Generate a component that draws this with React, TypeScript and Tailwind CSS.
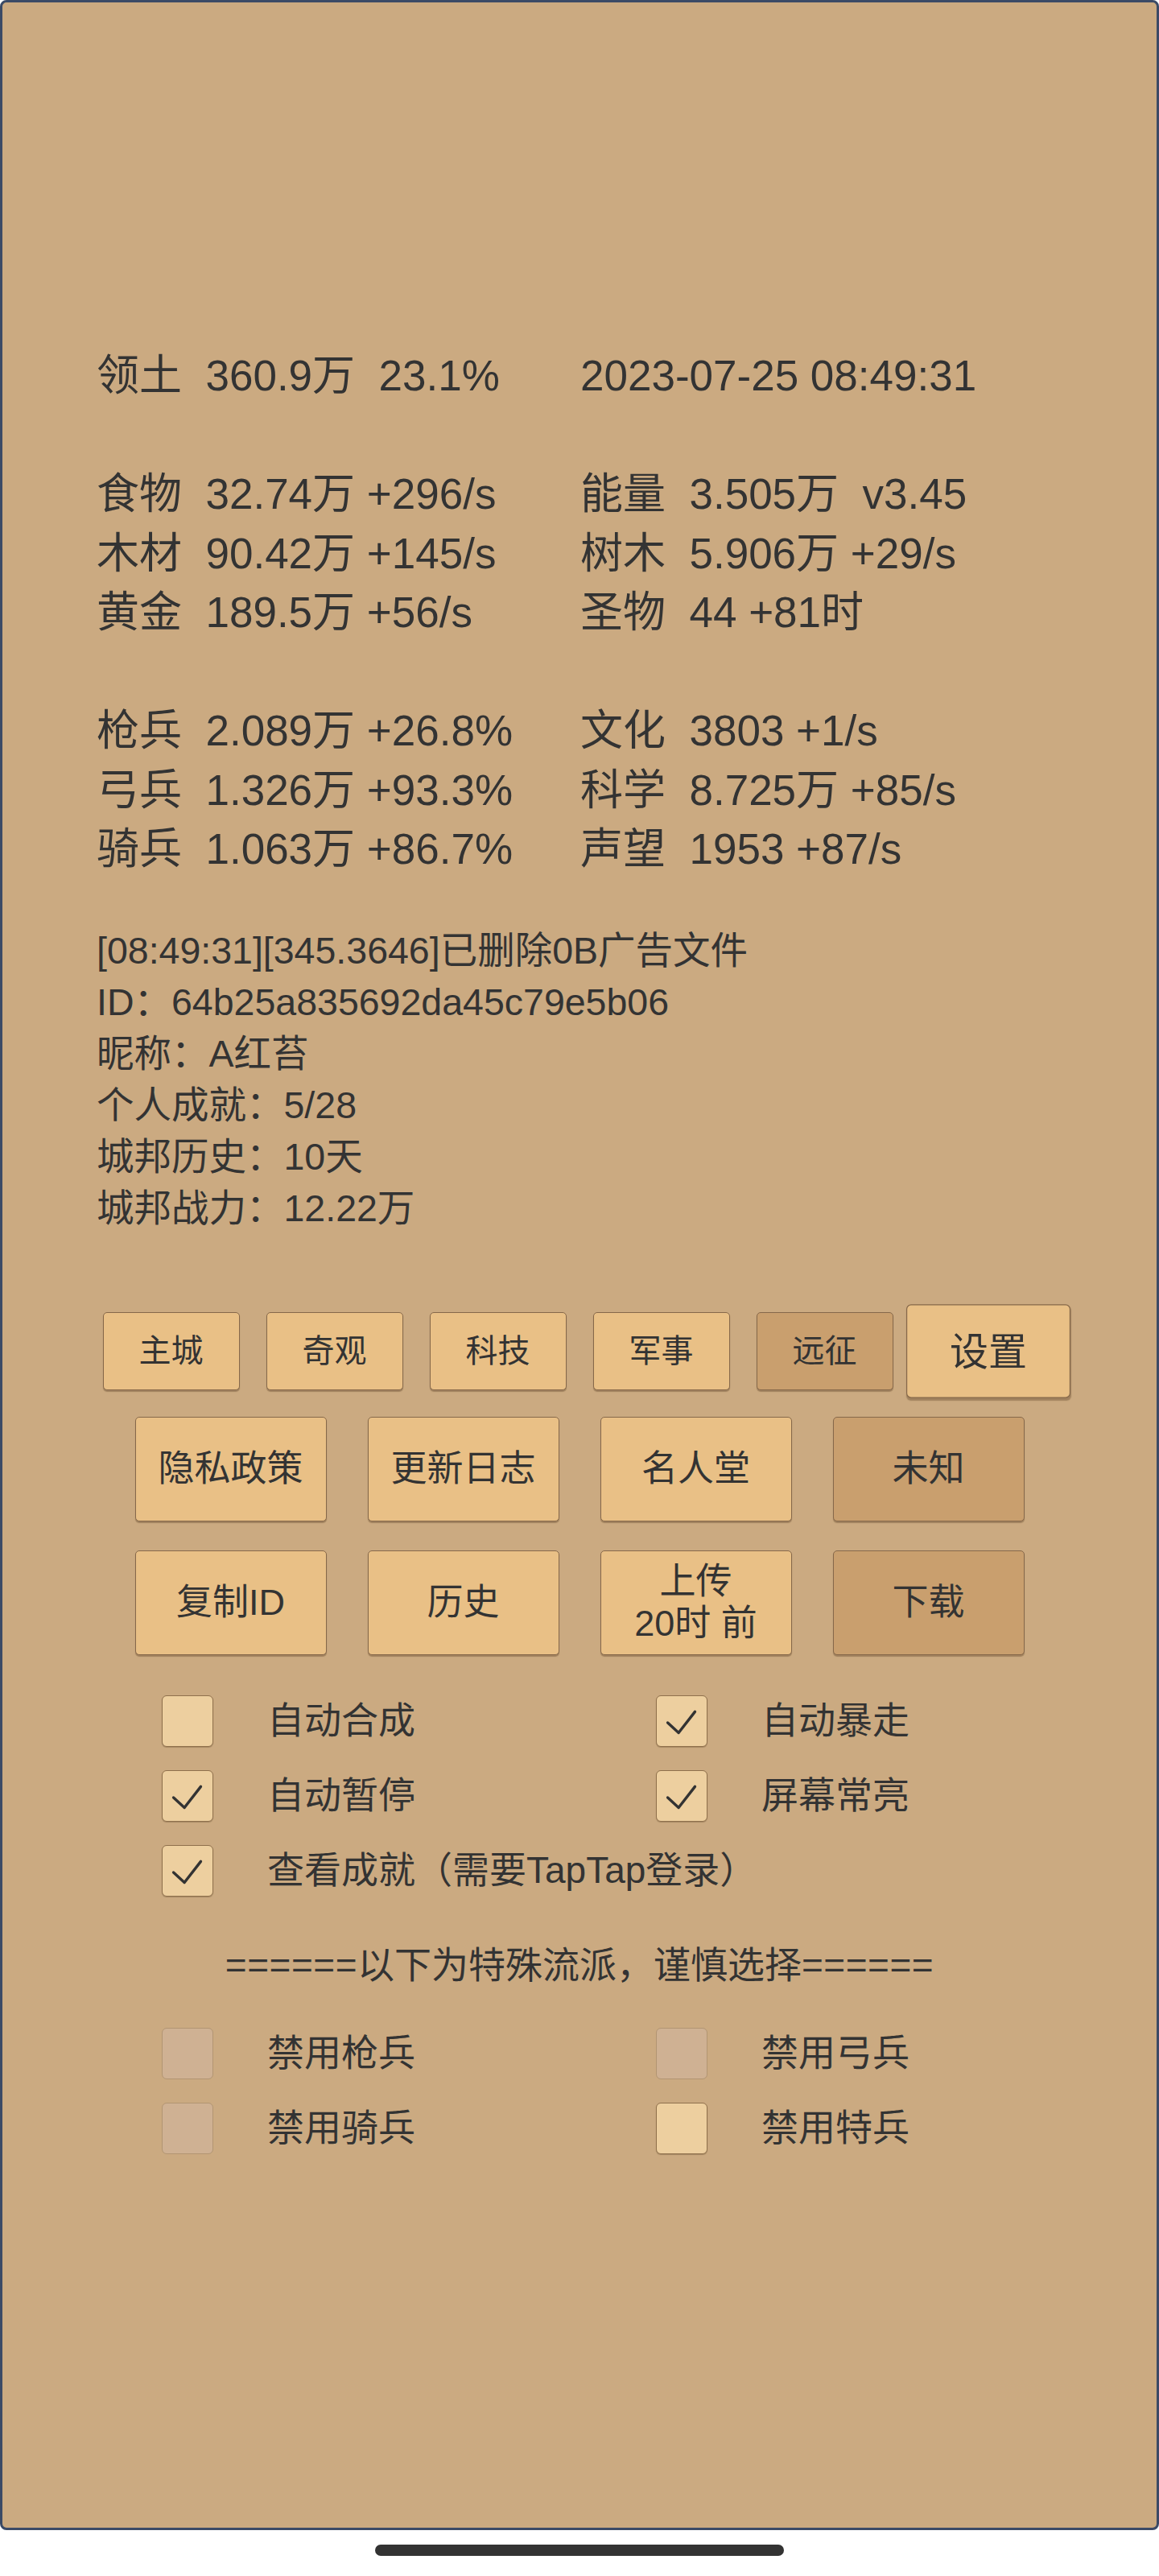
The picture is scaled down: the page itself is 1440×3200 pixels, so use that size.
import React from "react";

const leftStats = [
  "领土  360.9万  23.1%",
  "",
  "食物  32.74万 +296/s",
  "木材  90.42万 +145/s",
  "黄金  189.5万 +56/s",
  "",
  "枪兵  2.089万 +26.8%",
  "弓兵  1.326万 +93.3%",
  "骑兵  1.063万 +86.7%",
];

const rightStats = [
  "2023-07-25 08:49:31",
  "",
  "能量  3.505万  v3.45",
  "树木  5.906万 +29/s",
  "圣物  44 +81时",
  "",
  "文化  3803 +1/s",
  "科学  8.725万 +85/s",
  "声望  1953 +87/s",
];

const logLines = [
  "[08:49:31][345.3646]已删除0B广告文件",
  "ID：64b25a835692da45c79e5b06",
  "昵称：A红苔",
  "个人成就：5/28",
  "城邦历史：10天",
  "城邦战力：12.22万",
];

const tabs = [
  { label: "主城", dark: false },
  { label: "奇观", dark: false },
  { label: "科技", dark: false },
  { label: "军事", dark: false },
  { label: "远征", dark: true },
];

function StatColumn({ lines, width }: { lines: string[]; width: string }) {
  return (
    <div className={width}>
      {lines.map((line, i) => (
        <div key={i} className="h-[73.5px] leading-[73.5px] whitespace-pre">
          {line || "\u00a0"}
        </div>
      ))}
    </div>
  );
}

function BigButton({ children, dark }: { children: React.ReactNode; dark?: boolean }) {
  return (
    <div
      className={
        "w-[238px] h-[130px] flex flex-col items-center justify-center rounded-[5px] border border-[#86684a] shadow-[0_2px_1px_rgba(80,55,30,0.35)] text-[45px] leading-[52px] text-[#333] " +
        (dark ? "bg-[#C99F6E]" : "bg-[#E9C086]")
      }
    >
      {children}
    </div>
  );
}

function CheckBox({ checked, disabled }: { checked?: boolean; disabled?: boolean }) {
  return (
    <div
      className={
        "w-[64px] h-[64px] shrink-0 rounded-[6px] border " +
        (disabled
          ? "bg-[#CFB193] border-[#b29572]"
          : "bg-[#EDCF9F] border-[#8f704c] shadow-[0_1px_1px_rgba(80,55,30,0.3)]")
      }
    >
      {checked && (
        <svg viewBox="0 0 64 64" className="w-full h-full">
          <polyline
            points="14,34 28,47 49,20"
            fill="none"
            stroke="#333"
            strokeWidth="3.5"
            strokeLinecap="round"
            strokeLinejoin="round"
          />
        </svg>
      )}
    </div>
  );
}

function Option({ label, checked, disabled }: { label: string; checked?: boolean; disabled?: boolean }) {
  return (
    <div className="flex items-center h-[64px]">
      <CheckBox checked={checked} disabled={disabled} />
      <span className="ml-[67px] text-[46px] text-[#333] whitespace-nowrap">{label}</span>
    </div>
  );
}

export default function App() {
  return (
    <div className="w-[1440px] h-[3200px] bg-white font-['Liberation_Sans','Noto_Sans_CJK_SC',sans-serif]">
      <div className="h-[3143px] bg-[#CBAA81] border-[3px] border-[#3b4a66] rounded-[8px] flex flex-col">
        {/* 资源统计 */}
        <div className="mt-[427px] pl-[117px] flex text-[53px] text-[#333]">
          <StatColumn lines={leftStats} width="w-[601px]" />
          <StatColumn lines={rightStats} width="flex-1" />
        </div>

        {/* 日志 */}
        <div className="mt-[57px] pl-[117px] text-[46.5px] text-[#333]">
          {logLines.map((line, i) => (
            <div key={i} className="h-[64px] leading-[64px] whitespace-pre">
              {line}
            </div>
          ))}
        </div>

        {/* 标签页 */}
        <div className="mt-[97px] flex justify-center gap-[33px]">
          {tabs.map((t) => (
            <div
              key={t.label}
              className={
                "w-[170px] h-[97px] flex items-center justify-center rounded-[5px] border border-[#86684a] shadow-[0_2px_1px_rgba(80,55,30,0.35)] text-[40px] text-[#333] " +
                (t.dark ? "bg-[#C99F6E]" : "bg-[#E9C086]")
              }
            >
              {t.label}
            </div>
          ))}
          <div className="w-[170px] h-[97px] flex items-center justify-center rounded-[5px] border border-[#86684a] shadow-[0_2px_1px_rgba(80,55,30,0.35)] text-[40px] text-[#333] bg-[#E9C086] scale-[1.2]">
            设置
          </div>
        </div>

        <div className="mt-[33px] flex justify-center gap-[51px]">
          <BigButton>隐私政策</BigButton>
          <BigButton>更新日志</BigButton>
          <BigButton>名人堂</BigButton>
          <BigButton dark>未知</BigButton>
        </div>

        <div className="mt-[36px] flex justify-center gap-[51px]">
          <BigButton>复制ID</BigButton>
          <BigButton>历史</BigButton>
          <BigButton>
            <span>上传</span>
            <span className="whitespace-pre">20时 前</span>
          </BigButton>
          <BigButton dark>下载</BigButton>
        </div>

        {/* 选项 */}
        <div className="mt-[50px] pl-[198px] grid grid-cols-[614px_1fr] gap-y-[29px]">
          <Option label="自动合成" />
          <Option label="自动暴走" checked />
          <Option label="自动暂停" checked />
          <Option label="屏幕常亮" checked />
          <Option label="查看成就（需要TapTap登录）" checked />
        </div>

        <div className="mt-[55px] h-[60px] leading-[60px] text-center text-[46px] text-[#333]">
          <span className="tracking-[0.5px]">======</span>以下为特殊流派，谨慎选择<span className="tracking-[0.5px]">======</span>
        </div>

        <div className="mt-[48px] pl-[198px] grid grid-cols-[614px_1fr] gap-y-[29px]">
          <Option label="禁用枪兵" disabled />
          <Option label="禁用弓兵" disabled />
          <Option label="禁用骑兵" disabled />
          <Option label="禁用特兵" />
        </div>
      </div>

      <div className="flex justify-center pt-[18px]">
        <div className="w-[508px] h-[14px] rounded-full bg-[#333]" />
      </div>
    </div>
  );
}
